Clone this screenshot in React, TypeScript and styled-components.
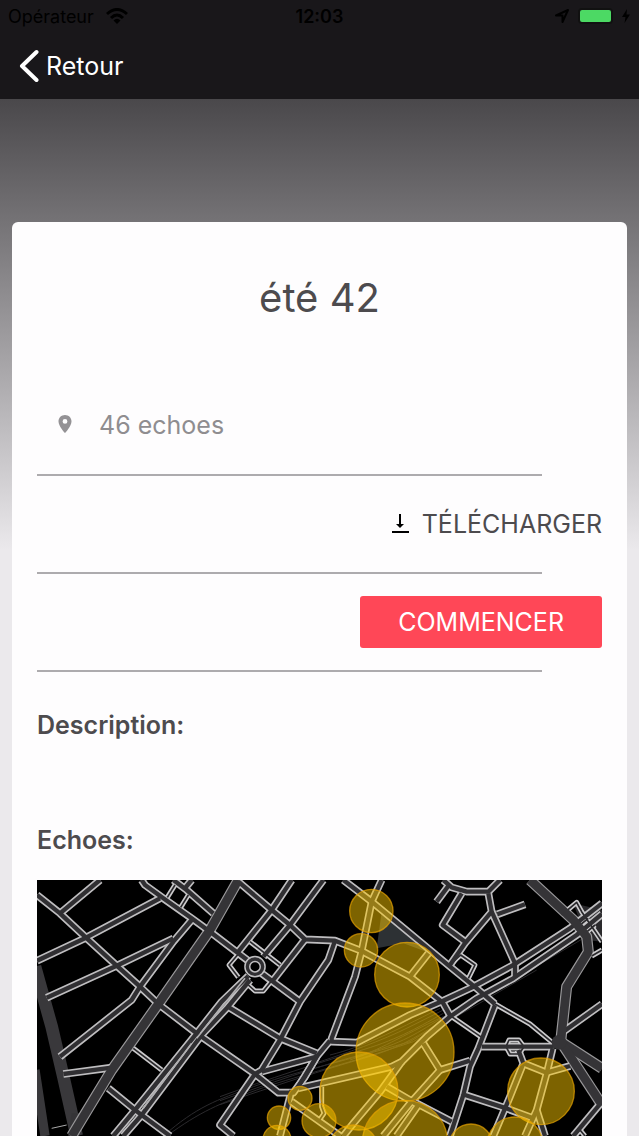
import React from "react";
import styled, { createGlobalStyle } from "styled-components";

const GlobalStyle = createGlobalStyle`
  * { box-sizing: border-box; }
  body {
    margin: 0;
    background: #ebe9ec;
    font-family: Inter, "Liberation Sans", sans-serif;
    color: #4d4b4e;
  }
`;

const Page = styled.div`
  display: flex;
  flex-direction: column;
  min-height: 100vh;
  background: linear-gradient(#4a484b 99px, #757376 222px, #b0aeb1 390px, #ebe9ec 550px);
`;

const Header = styled.header`
  background: #19171a;
  color: #fff;
`;

const StatusBar = styled.div`
  display: grid;
  grid-template-columns: 1fr auto 1fr;
  align-items: center;
  height: 32px;
  padding: 0 8px;
  font-size: 18px;
  color: #000;
`;

const StatusGroup = styled.div<{ $end?: boolean }>`
  display: flex;
  align-items: center;
  justify-content: ${(p) => (p.$end ? "flex-end" : "flex-start")};
  gap: ${(p) => (p.$end ? "8px" : "12px")};
`;

const Clock = styled.span`
  font-weight: 600;
`;

const Battery = styled.span`
  width: 35px;
  height: 16px;
  border: 2px solid #111;
  border-radius: 4px;
  background: #4cd964;
`;

const NavBar = styled.nav`
  display: flex;
  align-items: center;
  height: 67px;
  padding: 0 19px;
`;

const BackButton = styled.button`
  display: flex;
  align-items: center;
  gap: 7px;
  padding: 0;
  border: 0;
  background: none;
  color: inherit;
  font: 400 25px/32px Inter, "Liberation Sans", sans-serif;
`;

const Card = styled.main`
  flex: 1;
  margin: 123px 12px 0;
  padding: 0 25px;
  border-radius: 6px 6px 0 0;
  background: #fefdfe;
`;

const Title = styled.h1`
  margin: 0;
  padding: 48px 0 83px;
  font-size: 40px;
  line-height: 56px;
  font-weight: 400;
  text-align: center;
`;

const Row = styled.div<{ $end?: boolean }>`
  display: flex;
  align-items: center;
  justify-content: ${(p) => (p.$end ? "flex-end" : "flex-start")};
  height: 96px;
`;

const CountRow = styled.div`
  display: flex;
  align-items: flex-start;
  gap: 26px;
  height: 65px;
  padding-left: 20px;
  font-size: 25px;
  line-height: 32px;
  color: #8f8d90;

  svg { margin-top: 5px; }
`;

const Divider = styled.hr`
  width: calc(100% - 60px);
  height: 2px;
  margin: 0;
  border: 0;
  background: #adabae;
`;

const ActionButton = styled.button<{ $primary?: boolean }>`
  display: flex;
  align-items: center;
  justify-content: center;
  gap: 12px;
  height: 52px;
  padding: 0 ${(p) => (p.$primary ? "38px" : "0")};
  border: 0;
  border-radius: 3px;
  background: ${(p) => (p.$primary ? "#ff4757" : "none")};
  color: ${(p) => (p.$primary ? "#fff" : "inherit")};
  font: 400 25px/32px Inter, "Liberation Sans", sans-serif;
  text-transform: uppercase;
`;

const SectionTitle = styled.h2`
  margin: 0;
  padding-top: 37px;
  font-size: 25px;
  line-height: 32px;
  font-weight: 600;
`;

const Description = styled.div`
  height: 46px;
`;

const MapFrame = styled.div`
  height: 256px;
  margin-top: 24px;
  overflow: hidden;
  background: #000;

  svg { display: block; width: 100%; height: 100%; }
`;

const streets = [
  "M21 75L90 130L168 203L260 287L330 350L385 402L500 490L600 560L675 612L745 668H790L825 620L860 560L900 512",
  "M90 130L210 30",
  "M21 272L168 203L390 85",
  "M335 30L345 45L400 85L485 145L540 185L625 250L665 280",
  "M50 383L260 287L430 205",
  "M485 150L430 215L330 350L305 390L90 560",
  "M100 612L245 593",
  "M430 30L470 60L550 130",
  "M485 30L462 58",
  "M235 655L315 720L335 735L420 798",
  "M250 798L315 720L500 490L575 395L655 318",
  "M280 798L335 735L515 495L590 415L660 330",
  "M625 35L725 120L780 165L825 208L915 212L995 243L1140 320L1238 397L1262 440",
  "M785 30L725 120L625 245",
  "M880 30L780 165L700 260",
  "M825 208L730 330",
  "M695 310L810 395",
  "M915 212L895 270L810 395L750 510L695 600L675 612L570 765L610 798",
  "M590 408L750 505L860 550",
  "M695 605L860 560L805 650",
  "M995 243L975 320L905 505L905 515L980 518L1140 435L1238 393L1330 350L1450 285L1620 175L1716 100",
  "M1055 30L1025 95L995 243",
  "M940 30L1025 95L1140 190L1260 290L1340 355L1395 402",
  "M805 655L1085 590L1115 575L1190 500L1260 440L1340 385L1450 325L1640 195L1716 132",
  "M1180 520L1230 600L1140 700L1060 798",
  "M1230 600L1320 572",
  "M1395 405L1345 535L1320 590L1300 675L1260 798",
  "M1355 530H1570",
  "M1305 675L1420 712L1510 745",
  "M1140 690L1160 700L1265 755",
  "M1465 540L1480 580L1440 680L1390 798",
  "M1480 580L1550 608L1620 588",
  "M1568 535L1550 610L1520 720L1485 798",
  "M1520 720L1545 798",
  "M1240 30L1265 52L1310 65H1375L1410 30",
  "M1255 48L1220 95",
  "M1295 70L1238 165L1305 215",
  "M1375 70L1385 125L1305 220L1260 285",
  "M1385 125L1455 280V320",
  "M1402 133L1485 103",
  "M1600 485L1716 402",
  "M1712 700L1630 798",
  "M785 660L750 798",
  "M785 695L930 798",
  "M1115 575L1050 665L970 760L940 798",
  "M1070 650L1165 705L1100 798",
  "M1140 320L1195 250",
];

const lanes = [
  "M435 45L412 82",
  "M475 75L452 112",
  "M310 535L395 600",
  "M660 215L750 285",
  "M625 252L597 285L625 322",
  "M655 345L675 363H700L725 332",
  "M875 650V710L882 730L865 755",
  "M1270 275L1292 255L1335 285L1315 325",
  "M1395 402L1500 462L1570 520",
  "M1265 440L1355 502",
  "M1595 135L1640 97L1655 125L1716 215",
  "M1610 120L1625 145M1650 165L1675 145M1665 190L1695 165",
  "M1685 258L1716 240",
  "M1437 510H1467L1482 530L1467 552H1440L1428 530Z",
  "M1630 798L1650 780L1665 798",
];

const avenues = [
  "M625 30L540 180L385 402L245 600L160 740L125 798",
  "M1500 30L1630 150L1670 200L1675 245L1610 350L1592 515",
  "M1592 515L1716 595",
  "M1592 515L1716 705",
];

const railways = [
  "M400 798C500 710 560 690 670 650S900 585 1140 515L1500 300L1660 205",
  "M410 798C510 725 570 700 680 660S910 595 1150 515L1520 300",
  "M570 680C720 625 860 580 980 545S1150 480 1240 430",
  "M570 692C720 640 860 590 990 555S1160 490 1250 435",
  "M570 704C740 645 880 600 1000 565S1160 500 1260 438",
  "M840 585C960 545 1050 515 1140 470L1240 420",
  "M900 555C1000 530 1080 490 1230 415",
  "M960 570C1050 540 1110 500 1240 440",
];

const echoes = [
  [1024, 123, 65],
  [993, 241, 50],
  [1131, 314, 97],
  [1125, 546, 147],
  [987, 663, 117],
  [1533, 664, 100],
  [810, 685, 36],
  [747, 743, 35],
  [867, 752, 51],
  [741, 808, 42],
  [1125, 819, 128],
  [970, 840, 75],
  [1323, 828, 66],
  [1455, 825, 84],
];

const strokeAll = (paths: string[], color: string, width: number) => (
  <g stroke={color} strokeWidth={width} fill="none" strokeLinejoin="round">
    {paths.map((d) => (
      <path key={d} d={d} />
    ))}
  </g>
);

const EchoMap = () => (
  <svg viewBox="21 30 1695 768" preserveAspectRatio="xMidYMin slice" role="img" aria-label="Carte des echoes">
    <path d="M1055 125L1140 195L1215 255L1120 220L1040 235Z" fill="#2d3134" />
    <path d="M1630 100L1716 120V215L1670 210Z" fill="#2a292c" />
    {strokeAll(railways, "#2b2a2d", 3)}
    <g fill="none" stroke="#39383b">
      <path d="M15 290L65 470L100 620L140 798" strokeWidth="38" />
      <path d="M15 600L45 798" strokeWidth="28" />
      <path d="M65 775L110 765" stroke="#aaa" strokeWidth="3" />
    </g>
    <path d="M125 730L165 730L145 798H115Z" fill="#353437" />
    {strokeAll(avenues, "#99989a", 33)}
    {strokeAll(streets, "#bfbec0", 23)}
    {strokeAll(lanes, "#cccbcd", 15)}
    {strokeAll(lanes, "#29282b", 5)}
    {strokeAll(streets, "#302f32", 13)}
    {strokeAll(avenues, "#353437", 26)}
    <circle cx="675" cy="290" r="23" fill="#000" stroke="#bfbec0" strokeWidth="19" />
    <circle cx="675" cy="290" r="23" fill="none" stroke="#302f32" strokeWidth="10" />
    <path d="M500 505L645 325M340 715L485 520" stroke="#b0afb1" strokeWidth="5" />
    <circle cx="1587" cy="517" r="22" fill="#353437" />
    <g fill="#ffca00" fillOpacity="0.49" stroke="#e8a400" strokeOpacity="0.7" strokeWidth="4">
      {echoes.map(([x, y, r]) => (
        <circle key={`${x}-${y}`} cx={x} cy={y} r={r} />
      ))}
    </g>
  </svg>
);

const WifiIcon = () => (
  <svg width="22" height="16" viewBox="0 0 22 16" fill="none" stroke="#000" strokeWidth="3" aria-hidden="true">
    <path d="M1 6Q11 -3 21 6" />
    <path d="M5 10Q11 4 17 10" />
    <path d="M7.500 12.500Q11 9 14.500 12.500L11 16Z" fill="#000" stroke="none" />
  </svg>
);

const LocationIcon = () => (
  <svg width="16" height="16" viewBox="0 0 16 16" fill="none" stroke="#000" strokeWidth="2" strokeLinejoin="round" aria-hidden="true">
    <path d="M2 7.500L14 2L8.500 14V7.500Z" />
  </svg>
);

const BoltIcon = () => (
  <svg width="10" height="14" viewBox="0 0 10 14" aria-hidden="true">
    <path d="M6 0L1 8H4.500L3.500 14L9 5.500H5.500Z" fill="#000" />
  </svg>
);

const BackIcon = () => (
  <svg width="20" height="34" viewBox="0 0 20 34" fill="none" stroke="#fff" strokeWidth="4" strokeLinecap="round" strokeLinejoin="round" aria-hidden="true">
    <path d="M17.500 3L3 17L17.500 31" />
  </svg>
);

const PinIcon = () => (
  <svg width="16" height="20" viewBox="0 0 16 20" aria-hidden="true">
    <path fillRule="evenodd" fill="#949295" d="M8 1C4.300 1 1.500 3.800 1.500 7.400C1.500 12 8 19 8 19S14.500 12 14.500 7.400C14.500 3.800 11.700 1 8 1ZM8 5A2.400 2.400 0 1 1 8 9.800A2.400 2.400 0 0 1 8 5Z" />
  </svg>
);

const DownloadIcon = () => (
  <svg width="18" height="20" viewBox="0 0 18 20" aria-hidden="true">
    <path d="M7 0H9V10H12L8 14L4 10H7ZM0 17H17V19H0Z" fill="#000" />
  </svg>
);

export default function App() {
  return (
    <Page>
      <GlobalStyle />
      <Header>
        <StatusBar>
          <StatusGroup>
            <span>Opérateur</span>
            <WifiIcon />
          </StatusGroup>
          <Clock>12:03</Clock>
          <StatusGroup $end>
            <LocationIcon />
            <Battery />
            <BoltIcon />
          </StatusGroup>
        </StatusBar>
        <NavBar>
          <BackButton type="button">
            <BackIcon />
            Retour
          </BackButton>
        </NavBar>
      </Header>
      <Card>
        <Title>été 42</Title>
        <section>
          <CountRow>
            <PinIcon />
            <span>46 echoes</span>
          </CountRow>
          <Divider />
          <Row $end>
            <ActionButton type="button">
              <DownloadIcon />
              Télécharger
            </ActionButton>
          </Row>
          <Divider />
          <Row $end>
            <ActionButton type="button" $primary>
              Commencer
            </ActionButton>
          </Row>
          <Divider />
        </section>
        <SectionTitle>Description:</SectionTitle>
        <Description />
        <SectionTitle>Echoes:</SectionTitle>
        <MapFrame>
          <EchoMap />
        </MapFrame>
      </Card>
    </Page>
  );
}
